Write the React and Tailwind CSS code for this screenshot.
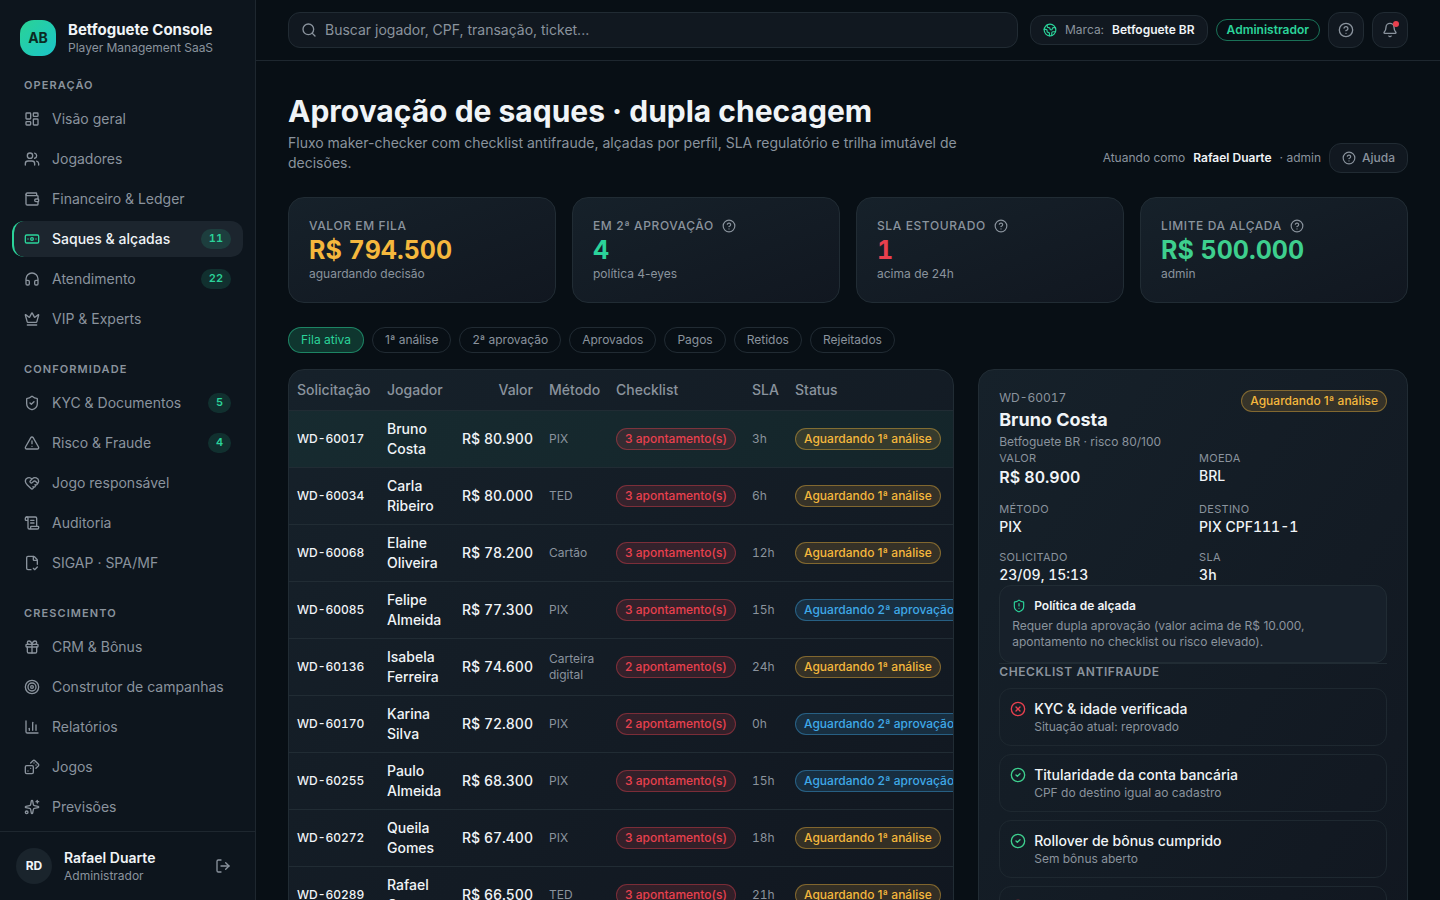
import React from 'react';
import {
  Banknote,
  Bell,
  ChartColumn,
  CircleCheck,
  CircleQuestionMark,
  CircleX,
  Crown,
  Dices,
  Earth,
  FileCheckCorner,
  Gift,
  Headphones,
  HeartHandshake,
  LayoutDashboard,
  LogOut,
  ScrollText,
  Search,
  ShieldAlert,
  ShieldCheck,
  Sparkles,
  Target,
  TriangleAlert,
  Users,
  Wallet,
} from 'lucide-react';

const navSections = [
  {
    title: 'Operação',
    items: [
      { label: 'Visão geral', icon: LayoutDashboard },
      { label: 'Jogadores', icon: Users },
      { label: 'Financeiro & Ledger', icon: Wallet },
      { label: 'Saques & alçadas', icon: Banknote, badge: 11, active: true },
      { label: 'Atendimento', icon: Headphones, badge: 22 },
      { label: 'VIP & Experts', icon: Crown },
    ],
  },
  {
    title: 'Conformidade',
    items: [
      { label: 'KYC & Documentos', icon: ShieldCheck, badge: 5 },
      { label: 'Risco & Fraude', icon: TriangleAlert, badge: 4 },
      { label: 'Jogo responsável', icon: HeartHandshake },
      { label: 'Auditoria', icon: ScrollText },
      { label: 'SIGAP · SPA/MF', icon: FileCheckCorner },
    ],
  },
  {
    title: 'Crescimento',
    items: [
      { label: 'CRM & Bônus', icon: Gift },
      { label: 'Construtor de campanhas', icon: Target },
      { label: 'Relatórios', icon: ChartColumn },
      { label: 'Jogos', icon: Dices },
      { label: 'Previsões', icon: Sparkles },
    ],
  },
];

const stats = [
  { label: 'Valor em fila', value: 'R$ 794.500', hint: 'aguardando decisão', color: 'text-[#f5b83d]' },
  { label: 'Em 2ª aprovação', value: '4', hint: 'política 4-eyes', color: 'text-[#2bd39a]', help: true },
  { label: 'SLA estourado', value: '1', hint: 'acima de 24h', color: 'text-[#e8404e]', help: true },
  { label: 'Limite da alçada', value: 'R$ 500.000', hint: 'admin', color: 'text-[#3ecf8e]', help: true },
];

const filters = ['Fila ativa', '1ª análise', '2ª aprovação', 'Aprovados', 'Pagos', 'Retidos', 'Rejeitados'];

const withdrawals = [
  { id: 'WD-60017', player: 'Bruno Costa', amount: 'R$ 80.900', method: 'PIX', flags: 3, sla: '3h', stage: 1 },
  { id: 'WD-60034', player: 'Carla Ribeiro', amount: 'R$ 80.000', method: 'TED', flags: 3, sla: '6h', stage: 1 },
  { id: 'WD-60068', player: 'Elaine Oliveira', amount: 'R$ 78.200', method: 'Cartão', flags: 3, sla: '12h', stage: 1 },
  { id: 'WD-60085', player: 'Felipe Almeida', amount: 'R$ 77.300', method: 'PIX', flags: 3, sla: '15h', stage: 2 },
  { id: 'WD-60136', player: 'Isabela Ferreira', amount: 'R$ 74.600', method: 'Carteira digital', flags: 2, sla: '24h', stage: 1 },
  { id: 'WD-60170', player: 'Karina Silva', amount: 'R$ 72.800', method: 'PIX', flags: 2, sla: '0h', stage: 2 },
  { id: 'WD-60255', player: 'Paulo Almeida', amount: 'R$ 68.300', method: 'PIX', flags: 3, sla: '15h', stage: 2 },
  { id: 'WD-60272', player: 'Queila Gomes', amount: 'R$ 67.400', method: 'PIX', flags: 3, sla: '18h', stage: 1 },
  { id: 'WD-60289', player: 'Rafael Costa', amount: 'R$ 66.500', method: 'TED', flags: 3, sla: '21h', stage: 1 },
];

const checklist = [
  { title: 'KYC & idade verificada', detail: 'Situação atual: reprovado', ok: false },
  { title: 'Titularidade da conta bancária', detail: 'CPF do destino igual ao cadastro', ok: true },
  { title: 'Rollover de bônus cumprido', detail: 'Sem bônus aberto', ok: true },
  { title: 'Score de risco', detail: 'Risco 80/100', ok: false },
];

const pillTones = {
  danger: 'border-[#e8404e]/40 bg-[#e8404e]/15 text-[#e8404e]',
  warning: 'border-[#f5b83d]/40 bg-[#f5b83d]/15 text-[#f5b83d]',
  info: 'border-[#3fa9e8]/40 bg-[#3fa9e8]/15 text-[#3fa9e8]',
};

const Pill = ({ tone, children }) => (
  <span className={`inline-flex h-[22px] items-center whitespace-nowrap rounded-full border px-2 text-xs font-medium ${pillTones[tone]}`}>
    {children}
  </span>
);

const StagePill = ({ stage }) => (
  <Pill tone={stage === 1 ? 'warning' : 'info'}>
    {stage === 1 ? 'Aguardando 1ª análise' : 'Aguardando 2ª aprovação'}
  </Pill>
);

const NavItem = ({ label, icon: Icon, badge, active }) => (
  <a
    href="#"
    className={`flex h-9 items-center gap-3 rounded-xl border-l-2 pl-[10px] pr-3 text-sm ${
      active ? 'border-[#2bd39a] bg-[#1c252e] font-medium text-[#f0f4f7]' : 'border-transparent text-[#8a939d]'
    }`}
  >
    <Icon size={16} className={active ? 'text-[#2bd39a]' : ''} />
    <span className="flex-1 whitespace-nowrap">{label}</span>
    {badge && (
      <span className="flex h-5 items-center rounded-full bg-[#2bd39a]/15 px-2 text-[11px] font-semibold tabular-nums text-[#2bd39a]">
        {badge}
      </span>
    )}
  </a>
);

const Sidebar = () => (
  <aside className="flex w-64 shrink-0 flex-col border-r border-[#1e272f] bg-[#0d151d]">
    <div className="flex items-center gap-3 px-5 pb-[21px] pt-5">
      <div className="flex h-9 w-9 items-center justify-center rounded-[14px] bg-linear-to-br from-[#2bd394] to-[#1cc3c8] text-sm font-bold text-[#0b2a22]">
        AB
      </div>
      <div>
        <p className="text-[15px] font-bold leading-5 text-[#f0f4f7]">Betfoguete Console</p>
        <p className="text-xs text-[#8a939d]">Player Management SaaS</p>
      </div>
    </div>
    <nav className="flex min-h-0 flex-1 flex-col gap-6 overflow-y-auto px-3 [scrollbar-width:none]">
      {navSections.map((section) => (
        <div key={section.title}>
          <h2 className="mb-2 px-3 text-[11px] font-semibold uppercase leading-4 tracking-widest text-[#8a939d]">
            {section.title}
          </h2>
          <div className="flex flex-col gap-1">
            {section.items.map((item) => (
              <NavItem key={item.label} {...item} />
            ))}
          </div>
        </div>
      ))}
    </nav>
    <div className="flex items-center gap-3 border-t border-[#1e272f] p-4">
      <div className="flex h-9 w-9 items-center justify-center rounded-full bg-[#1a242c] text-xs font-bold text-[#f0f4f7]">
        RD
      </div>
      <div className="flex-1">
        <p className="text-sm font-semibold text-[#f0f4f7]">Rafael Duarte</p>
        <p className="text-xs text-[#8a939d]">Administrador</p>
      </div>
      <button aria-label="Sair" className="flex h-8 w-8 items-center justify-center text-[#8a939d]">
        <LogOut size={16} />
      </button>
    </div>
  </aside>
);

const Topbar = () => (
  <header className="flex items-center gap-2 border-b border-[#1e272f] px-8 py-3">
    <label className="mr-1 flex h-9 flex-1 items-center gap-2 rounded-xl border border-[#212b33] bg-[#111820] px-3 text-[#8a939d]">
      <Search size={16} />
      <input
        type="text"
        aria-label="Buscar"
        placeholder="Buscar jogador, CPF, transação, ticket..."
        className="min-w-0 flex-1 bg-transparent text-sm outline-none placeholder:text-[#8a939d]"
      />
    </label>
    <button className="flex h-[30px] items-center gap-2 rounded-xl border border-[#212b33] bg-[#111820] px-3 text-xs text-[#8a939d]">
      <Earth size={14} className="text-[#2bd39a]" />
      <span>Marca:</span>
      <span className="font-semibold text-[#f0f4f7]">Betfoguete BR</span>
    </button>
    <span className="flex h-[22px] items-center rounded-full border border-[#2bd39a]/50 px-[10px] text-xs font-semibold text-[#2bd39a]">
      Administrador
    </span>
    <button aria-label="Ajuda" className="flex h-9 w-9 items-center justify-center rounded-xl border border-[#212b33] bg-[#111820] text-[#8a939d]">
      <CircleQuestionMark size={16} />
    </button>
    <button aria-label="Notificações" className="relative flex h-9 w-9 items-center justify-center rounded-xl border border-[#212b33] bg-[#111820] text-[#8a939d]">
      <Bell size={16} />
      <span className="absolute right-2 top-2 h-[6px] w-[6px] rounded-full bg-[#e8404e]" />
    </button>
  </header>
);

const StatCard = ({ label, value, hint, color, help }) => (
  <div className="rounded-2xl border border-[#212c34] bg-linear-to-br from-[#16212a] to-[#111720] p-5">
    <p className="flex items-center gap-2 text-xs font-medium uppercase tracking-wider text-[#8a939d]">
      {label}
      {help && <CircleQuestionMark size={14} />}
    </p>
    <p className={`text-[25px] font-bold leading-8 tabular-nums ${color}`}>{value}</p>
    <p className="text-xs text-[#8a939d]">{hint}</p>
  </div>
);

const WithdrawalsTable = () => (
  <div className="min-w-0 overflow-hidden rounded-2xl border border-[#212c34] bg-linear-to-br from-[#16212a] to-[#111720]">
    <table className="w-full min-w-[680px] table-fixed text-left text-sm text-[#f0f4f7]">
      <colgroup>
        <col className="w-[90px]" />
        <col className="w-[75px]" />
        <col className="w-[87px]" />
        <col className="w-[67px]" />
        <col className="w-[136px]" />
        <col className="w-[43px]" />
        <col />
      </colgroup>
      <thead>
        <tr className="h-10 border-b border-[#212c34] text-[#8a939d]">
          <th className="px-2 font-medium">Solicitação</th>
          <th className="px-2 font-medium">Jogador</th>
          <th className="px-2 text-right font-medium">Valor</th>
          <th className="px-2 font-medium">Método</th>
          <th className="px-2 font-medium">Checklist</th>
          <th className="px-2 font-medium">SLA</th>
          <th className="px-2 font-medium">Status</th>
        </tr>
      </thead>
      <tbody>
        {withdrawals.map((row, index) => (
          <tr key={row.id} className={`border-b border-[#212c34] ${index === 0 ? 'bg-[#2bd39a]/6' : ''}`}>
            <td className="whitespace-nowrap p-2 text-xs font-medium tabular-nums">{row.id}</td>
            <td className="p-2 font-medium">{row.player}</td>
            <td className="whitespace-nowrap p-2 text-right font-medium tabular-nums">{row.amount}</td>
            <td className="p-2 text-xs text-[#8a939d]">{row.method}</td>
            <td className="p-2">
              <div className="flex">
                <Pill tone="danger">{row.flags} apontamento(s)</Pill>
              </div>
            </td>
            <td className="p-2 text-xs tabular-nums text-[#8a939d]">{row.sla}</td>
            <td className="p-2">
              <div className="flex">
                <StagePill stage={row.stage} />
              </div>
            </td>
          </tr>
        ))}
      </tbody>
    </table>
  </div>
);

const Field = ({ label, large, children }) => (
  <div>
    <dt className="text-[11px] uppercase leading-4 tracking-wide text-[#8a939d]">{label}</dt>
    <dd className={`tabular-nums text-[#f0f4f7] ${large ? 'text-base font-semibold leading-[23px]' : 'text-sm font-medium'}`}>
      {children}
    </dd>
  </div>
);

const DetailPanel = () => (
  <section className="rounded-2xl border border-[#212c34] bg-linear-to-br from-[#16212a] to-[#111720] p-5">
    <div className="flex items-start justify-between">
      <div>
        <p className="text-xs tabular-nums text-[#8a939d]">WD-60017</p>
        <h2 className="text-lg font-bold leading-7 text-[#f0f4f7]">Bruno Costa</h2>
        <p className="text-xs text-[#8a939d]">Betfoguete BR · risco 80/100</p>
      </div>
      <StagePill stage={1} />
    </div>
    <dl className="grid grid-cols-2 gap-3">
      <Field label="Valor" large>R$ 80.900</Field>
      <Field label="Moeda">BRL</Field>
      <Field label="Método">PIX</Field>
      <Field label="Destino">PIX CPF111-1</Field>
      <Field label="Solicitado">23/09, 15:13</Field>
      <Field label="SLA">3h</Field>
    </dl>
    <div className="rounded-xl border border-[#212c34] bg-[#17202a] p-3">
      <p className="flex items-center gap-2 text-xs font-semibold text-[#f0f4f7]">
        <ShieldAlert size={14} className="text-[#2bd39a]" />
        Política de alçada
      </p>
      <p className="mt-1 text-xs text-[#8a939d]">
        Requer dupla aprovação (valor acima de R$ 10.000, apontamento no checklist ou risco elevado).
      </p>
    </div>
    <h3 className="mb-2 border-t border-[#212c34] text-xs font-semibold uppercase tracking-wider text-[#8a939d]">
      Checklist antifraude
    </h3>
    <ul className="flex flex-col gap-2">
      {checklist.map((item) => (
        <li key={item.title} className="flex gap-2 rounded-xl border border-[#1e2830] p-[10px]">
          {item.ok ? (
            <CircleCheck size={16} className="mt-0.5 text-[#3ecf8e]" />
          ) : (
            <CircleX size={16} className="mt-0.5 text-[#e8404e]" />
          )}
          <div>
            <p className="text-sm font-medium text-[#f0f4f7]">{item.title}</p>
            <p className="text-xs text-[#8a939d]">{item.detail}</p>
          </div>
        </li>
      ))}
    </ul>
  </section>
);

const App = () => {
  return (
    <div className="flex h-screen overflow-hidden bg-[#080f15] font-['Inter',sans-serif] text-[#f0f4f7]">
      <Sidebar />
      <div className="flex min-w-0 flex-1 flex-col">
        <Topbar />
        <main className="min-h-0 flex-1 overflow-y-auto p-8 [scrollbar-width:none]">
          <div className="mb-6 flex items-end justify-between gap-4">
            <div className="max-w-2xl">
              <h1 className="text-3xl font-bold leading-9">Aprovação de saques · dupla checagem</h1>
              <p className="mt-1 text-sm text-[#8a939d]">
                Fluxo maker-checker com checklist antifraude, alçadas por perfil, SLA regulatório e trilha imutável de decisões.
              </p>
            </div>
            <div className="flex items-center gap-2 text-xs text-[#8a939d]">
              <span>Atuando como</span>
              <span className="font-semibold text-[#f0f4f7]">Rafael Duarte</span>
              <span>· admin</span>
              <button className="flex h-[30px] items-center gap-[6px] rounded-xl border border-[#212b33] bg-[#111820] px-3 font-medium">
                <CircleQuestionMark size={14} />
                Ajuda
              </button>
            </div>
          </div>

          <div className="mb-6 grid grid-cols-4 gap-4">
            {stats.map((stat) => (
              <StatCard key={stat.label} {...stat} />
            ))}
          </div>

          <div className="mb-4 flex flex-wrap gap-2">
            {filters.map((filter, index) => (
              <button
                key={filter}
                className={`h-[26px] rounded-full border px-3 text-xs ${
                  index === 0
                    ? 'border-[#2bd39a]/50 bg-[#2bd39a]/20 text-[#2bd39a]'
                    : 'border-[#212b33] text-[#8a939d]'
                }`}
              >
                {filter}
              </button>
            ))}
          </div>

          <div className="grid grid-cols-[minmax(0,1.55fr)_minmax(0,1fr)] items-start gap-6">
            <WithdrawalsTable />
            <DetailPanel />
          </div>
        </main>
      </div>
    </div>
  );
};

export default App;
